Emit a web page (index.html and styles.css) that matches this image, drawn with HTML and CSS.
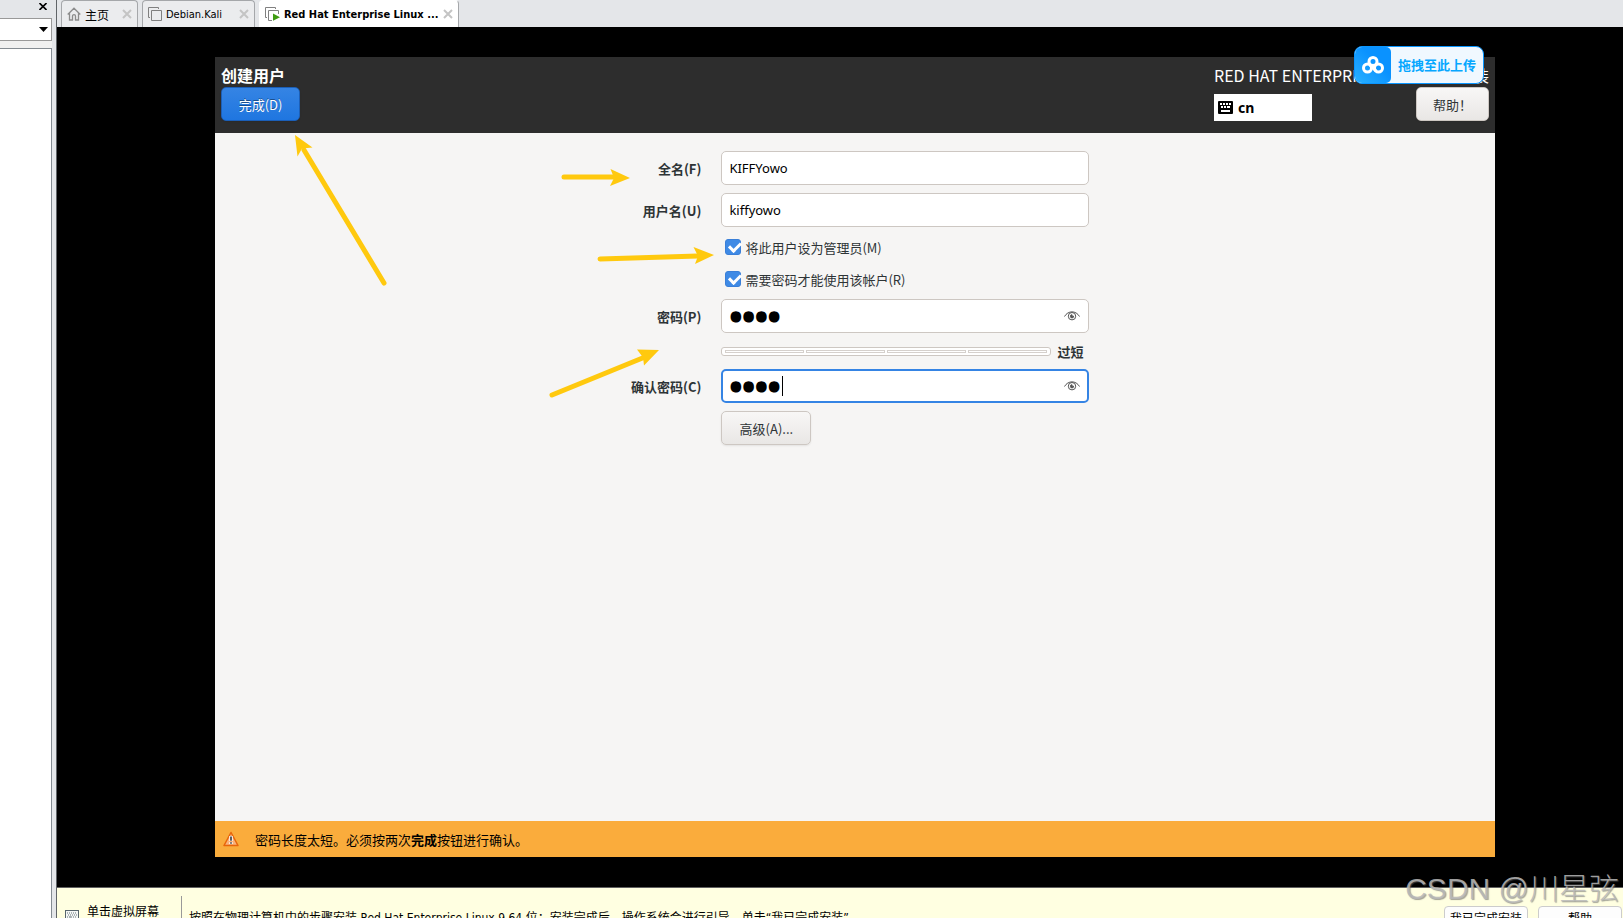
FILE: index.html
```html
<!DOCTYPE html>
<html lang="zh-CN">
<head>
<meta charset="utf-8">
<title>Red Hat Enterprise Linux</title>
<link rel="stylesheet" href="styles.css">
</head>
<body>
<aside class="sidebar">
  <div class="sidebar-head">
    <button class="sidebar-close" type="button" aria-label="关闭">
      <svg width="8" height="7" viewBox="0 0 8 7"><path d="M.5 0l7 7M7.500 0l-7 7" stroke="#000" stroke-width="1.600"/></svg>
    </button>
  </div>
  <button class="sidebar-filter" type="button" aria-label="筛选">
    <svg width="9" height="5" viewBox="0 0 9 5"><path d="M0 0h9L4.500 5z"/></svg>
  </button>
  <div class="library"></div>
</aside>

<div class="workspace">
  <nav class="tabs">
    <a class="tab tab-home" href="#home">
      <svg class="tab-icon" width="14" height="14" viewBox="0 0 14 14" fill="none" stroke="#8c8c8c" stroke-width="1.300"><path d="M.7 7.500L7 1.200l6.300 6.300M2.500 6v7h3V9.200c0-2 3-2 3 0V13h3V6"/></svg>
      <span>主页</span>
      <svg class="tab-close" width="10" height="10" viewBox="0 0 10 10"><path d="M1 1l8 8M9 1l-8 8" stroke="#c4c4c4" stroke-width="2"/></svg>
    </a>
    <a class="tab tab-kali" href="#kali">
      <svg class="tab-icon" width="14" height="14" viewBox="0 0 14 14" fill="none" stroke="#808080"><path d="M3.500 3.500h10v10h-10zM2 10.500H.5V.5h10V2"/></svg>
      <span>Debian.Kali</span>
      <svg class="tab-close" width="10" height="10" viewBox="0 0 10 10"><path d="M1 1l8 8M9 1l-8 8" stroke="#c4c4c4" stroke-width="2"/></svg>
    </a>
    <a class="tab tab-active" href="#rhel">
      <svg class="tab-icon" width="15" height="14" viewBox="0 0 15 14" fill="none" stroke="#808080"><path d="M7 13.500H3.500v-10h10V7M2 10.500H.5V.5h10V2"/><path d="M8 6.500l7 3.700-7 3.600z" fill="#3f9c12" stroke="none"/></svg>
      <span>Red Hat Enterprise Linux ...</span>
      <svg class="tab-close" width="10" height="10" viewBox="0 0 10 10"><path d="M1 1l8 8M9 1l-8 8" stroke="#c4c4c4" stroke-width="2"/></svg>
    </a>
  </nav>

  <main class="screen">
    <section class="installer">
      <header class="installer-head">
        <div class="head-left">
          <h1 class="title">创建用户</h1>
          <button class="btn btn-primary" type="button">完成(D)</button>
        </div>
        <div class="head-right">
          <div class="product"><span>RED HAT ENTERPRISE LINUX 9.0</span><span>安装</span></div>
          <div class="head-tools">
            <button class="layout" type="button">
              <svg width="15" height="13" viewBox="0 0 15 13"><rect width="15" height="13" rx="1"/><path d="M2 3h2M5 3h2M8 3h2M11 3h2M3 6h2M6 6h2M9 6h3M3 10h9" stroke="#fff" stroke-width="2"/></svg>
              <span>cn</span>
            </button>
            <button class="btn" type="button">帮助！</button>
          </div>
          <div class="upload">
            <span class="upload-logo">
              <svg width="22" height="18" viewBox="0 0 22 18" fill="none" stroke="#fff" stroke-width="3"><circle cx="11" cy="5.500" r="4"/><circle cx="5.500" cy="12" r="4"/><circle cx="16.500" cy="12" r="4"/><path d="M8.500 9.500l5 5" stroke-linecap="round"/></svg>
            </span>
            <span class="upload-text">拖拽至此上传</span>
          </div>
        </div>
      </header>

      <form class="form">
        <label class="label" for="fullname">全名(F)</label>
        <input class="field" id="fullname" type="text" value="KIFFYowo">
        <label class="label" for="username">用户名(U)</label>
        <input class="field" id="username" type="text" value="kiffyowo">
        <label class="check"><input type="checkbox" checked><span>将此用户设为管理员(M)</span></label>
        <label class="check"><input type="checkbox" checked><span>需要密码才能使用该帐户(R)</span></label>
        <label class="label" for="password">密码(P)</label>
        <div class="secret">
          <input class="field" id="password" type="password" value="abcd">
          <svg class="eye" width="16" height="10" viewBox="0 0 16 10" fill="none" stroke="#555"><path d="M.5 5.500C4-.7 12-.7 15.500 5.500"/><circle cx="8" cy="5.200" r="3.700"/><path d="M8 3.700v1.500h1.600A1.600 1.600 0 1 1 8 3.700" fill="#555"/></svg>
        </div>
        <div class="strength">
          <div class="meter"><i></i><i></i><i></i><i></i></div>
          <span>过短</span>
        </div>
        <label class="label" for="confirm">确认密码(C)</label>
        <div class="secret">
          <input class="field field-focus" id="confirm" type="password" value="abcd">
          <span class="caret"></span>
          <svg class="eye" width="16" height="10" viewBox="0 0 16 10" fill="none" stroke="#555"><path d="M.5 5.500C4-.7 12-.7 15.500 5.500"/><circle cx="8" cy="5.200" r="3.700"/><path d="M8 3.700v1.500h1.600A1.600 1.600 0 1 1 8 3.700" fill="#555"/></svg>
        </div>
        <button class="btn advanced" type="button">高级(A)...</button>
      </form>

      <footer class="warning">
        <svg width="16" height="16" viewBox="0 0 16 16"><path d="M8 1.500L15 14.500H1z" fill="#f9b27c" stroke="#e8650a" stroke-width="1.500" stroke-linejoin="round"/><path d="M8 5v5M8 11.300v1.700" stroke="#fff" stroke-width="3.400"/><path d="M8 5.500v4.200M8 11.200v1.600" stroke="#444" stroke-width="1.700"/></svg>
        <p>密码长度太短。必须按两次<b>完成</b>按钮进行确认。</p>
      </footer>
    </section>
  </main>

  <footer class="hint">
    <svg class="hint-icon" width="14" height="14" viewBox="0 0 14 14"><rect x=".5" y=".5" width="13" height="13" fill="#f4f6f4" stroke="#56646c"/><path d="M2 3h10M3 5h9M2 7h2m2 0h6M2 9h2m3 0h5" stroke="#66747c" stroke-dasharray="1 1"/><path d="M5 6v7l2-2 1 3" stroke="#56646c" fill="#fff"/></svg>
    <p class="hint-click">单击虚拟屏幕</p>
    <p class="hint-steps">按照在物理计算机中的步骤安装 Red Hat Enterprise Linux 9 64 位；安装完成后，操作系统会进行引导，单击“我已完成安装”。</p>
    <div class="hint-actions">
      <button class="hint-btn" type="button">我已完成安装</button>
      <button class="hint-btn" type="button">帮助</button>
    </div>
  </footer>
</div>

<svg class="arrows" width="720" height="420" viewBox="0 0 720 420" stroke="#ffc90e" stroke-width="5" stroke-linecap="round" fill="#ffc90e">
  <path d="M384 283L304 150"/><path stroke="none" d="M295 135l17.500 12.500-10.500 1-4.500 8z"/>
  <path d="M564 177h52"/><path stroke="none" d="M630 178l-20 8 4-8-3.500-9z"/>
  <path d="M600 259l98-3"/><path stroke="none" d="M714 255l-19 9 3-8-4.500-9z"/>
  <path d="M552 395l93-38"/><path stroke="none" d="M659 350l-15 15.500-1-8-6-8z"/>
</svg>
<div class="watermark">CSDN @川星弦</div>
</body>
</html>
```
FILE: styles.css
```css
* { box-sizing: border-box; }
body {
  margin: 0;
  height: 100vh;
  display: flex;
  position: relative;
  overflow: hidden;
  background: #e4e6e9;
  font-family: "Noto Sans CJK SC", sans-serif;
  font-size: 13px;
}
button, input { font: inherit; color: inherit; }
h1, p { margin: 0; }
svg { flex: none; }

/* library panel */
.sidebar {
  width: 52px;
  flex: none;
  display: flex;
  flex-direction: column;
  background: #f0f0f0;
}
.sidebar-head {
  height: 18px;
  display: flex;
  justify-content: flex-end;
  align-items: flex-start;
  padding: 2px 5px 0 0;
  background: #e4e6e9;
}
.sidebar-close { border: 0; padding: 0; background: none; line-height: 6px; }
.sidebar-filter {
  height: 23px;
  padding: 0 3px 0 0;
  border: 1px solid #999;
  border-left: 0;
  background: #fff;
  display: flex;
  align-items: center;
  justify-content: flex-end;
}
.library {
  flex: 1;
  margin-top: 7px;
  background: #fff;
  border: 1px solid #848b92;
  border-width: 1px 1px 0 0;
}

.workspace {
  flex: 1;
  min-width: 0;
  margin-left: 4px;
  border-left: 1px solid #606468;
  display: flex;
  flex-direction: column;
}

/* tabs */
.tabs { height: 27px; flex: none; display: flex; gap: 4px; padding-left: 4px; }
.tab {
  display: flex;
  align-items: center;
  padding: 0 5px;
  border: 1px solid #a5a7aa;
  border-bottom: 0;
  border-radius: 4px 4px 0 0;
  background: #ebecee;
  color: #000;
  font: 11px "DejaVu Sans Condensed", "Noto Sans CJK SC", sans-serif;
  text-decoration: none;
  white-space: nowrap;
}
.tab-icon { margin-right: 4px; }
.tab-close { margin-left: auto; }
.tab-home { width: 77px; font-size: 12px; }
.tab-kali { width: 113px; }
.tab-active { width: 200px; background: #fff; border-color: #fff #a5a7aa #fff #fff; font-weight: bold; }

/* virtual machine screen */
.screen {
  flex: 1;
  min-height: 0;
  padding: 30px 128px 30px 158px;
  background: #000;
  border-bottom: 1px solid #606060;
  display: flex;
}
.installer {
  flex: 1;
  display: flex;
  flex-direction: column;
  background: #f6f5f4;
  color: #2e3436;
}
.installer-head {
  height: 76px;
  flex: none;
  display: flex;
  justify-content: space-between;
  padding: 7px 6px 0;
  background: #2d2d2d;
  color: #fff;
}
.title, .product { font-size: 16px; line-height: 23px; white-space: nowrap; }
.title { font-weight: 700; }
.head-right { position: relative; min-width: 275px; }
.product { display: flex; justify-content: space-between; }
.head-tools { display: flex; justify-content: space-between; align-items: flex-end; }
.layout {
  width: 98px;
  height: 27px;
  display: flex;
  align-items: center;
  gap: 5px;
  padding: 0 4px;
  border: 0;
  background: #fff;
  color: #000;
  font: bold 14px "Noto Sans", sans-serif;
}
.btn {
  height: 34px;
  padding: 0 16px;
  border: 1px solid #cdc7c2;
  border-radius: 5px;
  background: linear-gradient(#f8f7f6, #e9e7e5);
  box-shadow: 0 1px 2px rgba(0, 0, 0, .08);
  color: #2e3436;
}
.btn-primary {
  display: block;
  min-width: 79px;
  border-color: #1b5fb8;
  background: linear-gradient(#3584e4, #1f76e0);
  color: #fff;
  text-shadow: 0 -1px rgba(0, 0, 0, .4);
}

/* floating upload target */
.upload {
  position: absolute;
  right: 5px;
  top: -18px;
  width: 130px;
  height: 38px;
  display: flex;
  border: 1px solid #0a96ff;
  border-radius: 8px;
  background: #f0f8ff;
  overflow: hidden;
}
.upload-logo {
  width: 36px;
  display: flex;
  align-items: center;
  justify-content: center;
  border-radius: 0 5px 5px 0;
  background: linear-gradient(45deg, #29b0ff, #0a92ff 60%);
}
.upload-text {
  flex: 1;
  text-align: center;
  font-weight: 700;
  line-height: 36px;
  white-space: nowrap;
  color: #06a7ff;
}

/* user form */
.form {
  flex: 1;
  display: grid;
  grid-template-columns: 38% 368px;
  grid-auto-rows: max-content;
  column-gap: 20px;
  row-gap: 8px;
  align-content: start;
  align-items: center;
  padding-top: 18px;
}
.label { text-align: right; font-weight: 700; }
.field {
  display: block;
  width: 100%;
  height: 34px;
  padding: 0 7px;
  border: 1px solid #cdc7c2;
  border-radius: 5px;
  background: #fff;
  color: #000;
  font-family: "Noto Sans", sans-serif;
  outline: 0;
}
.field[type="password"] {
  padding-top: 4px;
  font: 38px/28px Roboto, sans-serif;
  -webkit-text-stroke: 3px #000;
}
.field-focus { border: 2px solid #3584e4; padding: 0 6px; }
.secret { position: relative; }
.eye { position: absolute; right: 9px; top: 12px; }
.caret { position: absolute; left: 61px; top: 7px; width: 1px; height: 20px; background: #000; }
.check, .strength, .advanced { grid-column: 2; }
.check { display: flex; align-items: center; gap: 4px; height: 24px; padding-left: 4px; }
.check input {
  appearance: none;
  position: relative;
  width: 16px;
  height: 16px;
  margin: 0;
  border: 1px solid #3a7fd8;
  border-radius: 3px;
  background: #3f8ae5;
}
.check input::before {
  content: "";
  position: absolute;
  left: 3px;
  top: 2px;
  width: 9px;
  height: 5px;
  border: solid #fff;
  border-width: 0 0 3px 3px;
  transform: rotate(-45deg);
}
.strength { display: flex; align-items: center; gap: 6px; height: 20px; font-weight: 700; }
.meter {
  width: 330px;
  height: 9px;
  display: flex;
  gap: 2px;
  padding: 2px 3px;
  border: 1px solid #cdc7c2;
  border-radius: 3px;
  background: #fff;
}
.meter i { flex: 1; border: 1px solid #d5d0cc; }
.advanced { justify-self: start; min-width: 90px; }

.warning {
  height: 36px;
  flex: none;
  display: flex;
  align-items: center;
  gap: 16px;
  padding-left: 8px;
  background: #faac3c;
  color: #000;
}

/* install hint bar */
.hint {
  height: 30px;
  flex: none;
  display: flex;
  align-items: flex-start;
  overflow: hidden;
  padding-left: 8px;
  background: #ffffe1;
  color: #000;
  font: 12px/18px "DejaVu Sans Condensed", "Noto Sans CJK SC", sans-serif;
  white-space: nowrap;
}
.hint-icon { margin: 22px 8px 0 0; }
.hint-click { padding-top: 15px; width: 94px; }
.hint-steps { margin-top: 8px; padding: 13px 0 0 7px; border-left: 1px solid #999; }
.hint-actions { margin-left: auto; display: flex; gap: 10px; padding: 18px 1px 0 0; }
.hint-btn { width: 84px; height: 26px; padding: 0; border: 1px solid #ccc; border-radius: 4px; background: #fdfdfd; }

.arrows { position: absolute; left: 0; top: 0; pointer-events: none; }
.watermark {
  position: absolute;
  right: 4px;
  bottom: 7px;
  font: 30px/44px "Liberation Sans", "Noto Sans CJK SC", sans-serif;
  font-weight: 300;
  color: rgba(185, 185, 185, .85);
  text-shadow: 1px 1px 1px rgba(100, 100, 100, .6);
  pointer-events: none;
  white-space: nowrap;
}
```
